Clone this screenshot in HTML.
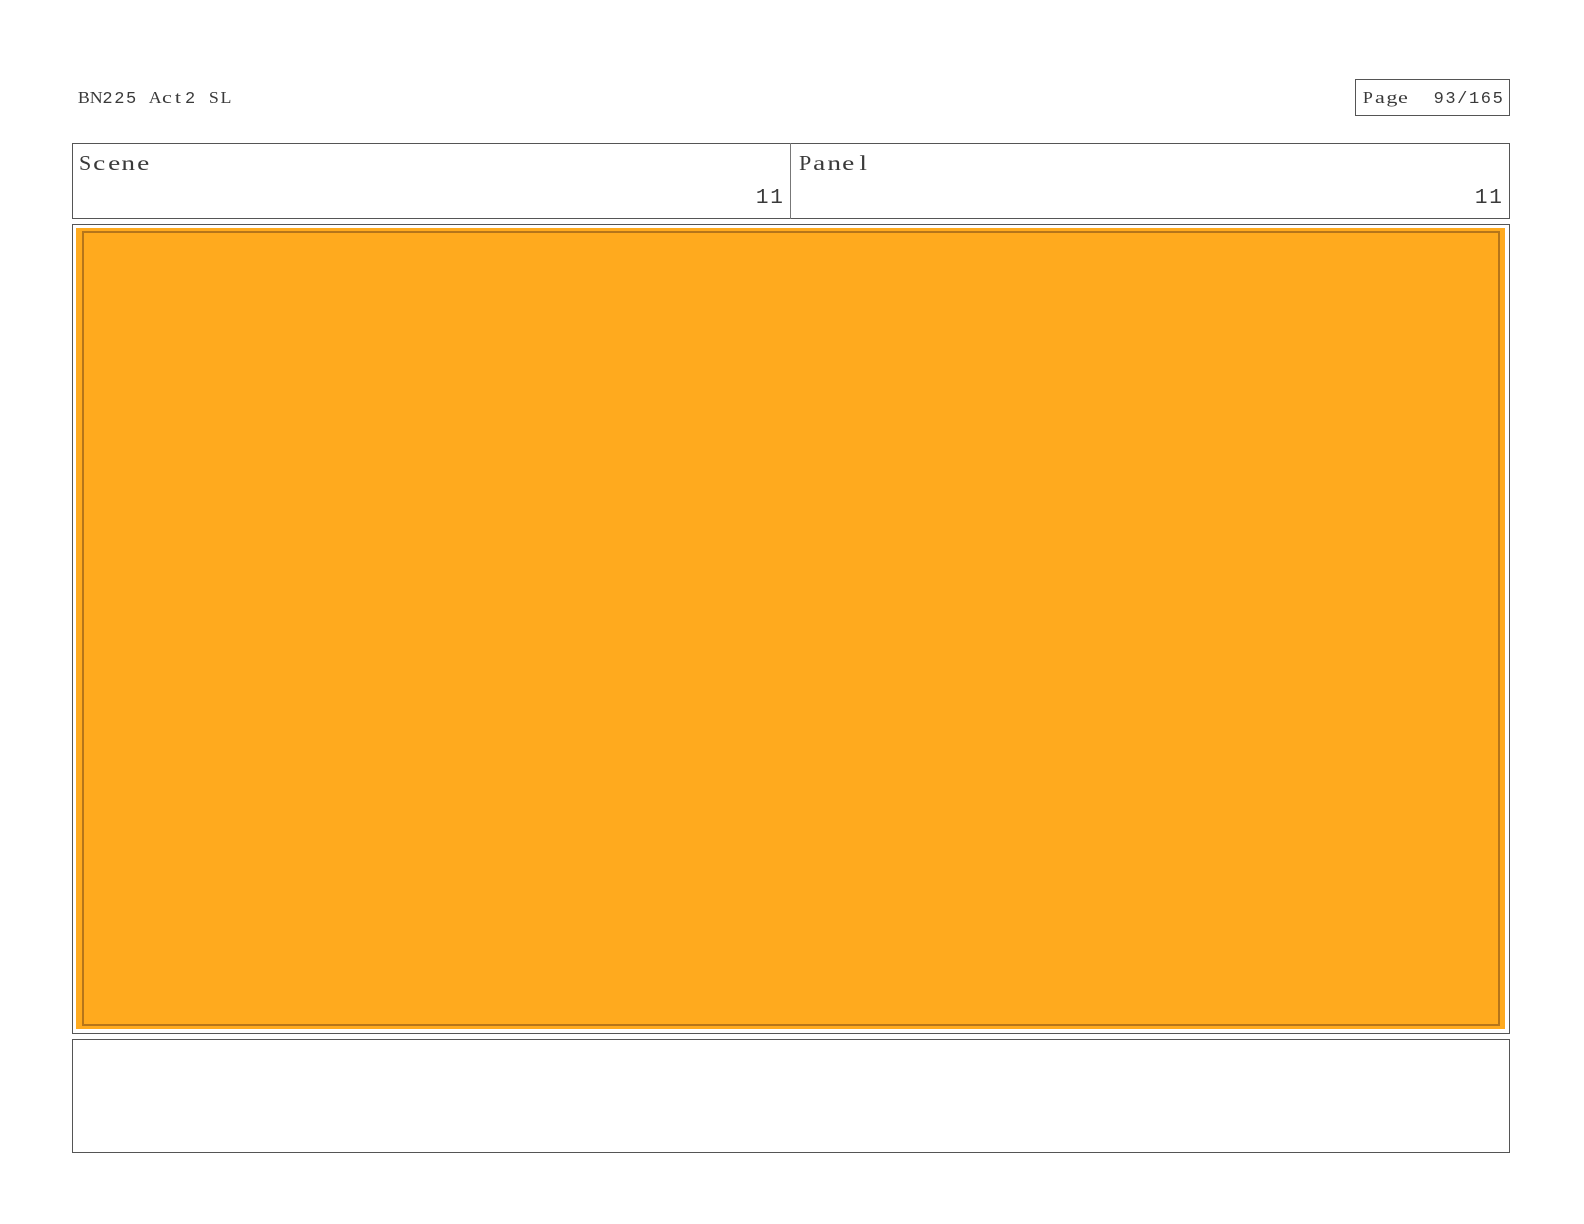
<!DOCTYPE html>
<html><head><meta charset="utf-8">
<style>
html,body{margin:0;padding:0;background:#fff;}
body{width:1584px;height:1224px;position:relative;overflow:hidden;color:#3a3a3a;}
.b{position:absolute;box-sizing:border-box;}
.t{position:absolute;white-space:pre;font-family:"Liberation Serif",serif;}
.t span{display:inline-block;text-align:center;white-space:pre;transform:scaleX(1.3);}
.t .d{font-family:"Liberation Mono",monospace;transform:none;}
.t .c{transform:scaleX(1.05);}
.s{font-size:17px;line-height:20px;}
.s span{width:11.8px;}
.l{font-size:21px;line-height:24px;}
.l span{width:14.4px;}
</style></head><body>
<div class="t s" style="left:78px;top:88px;"><span class="c">B</span><span class="c">N</span><span class="d">2</span><span class="d">2</span><span class="d">5</span><span> </span><span class="c">A</span><span>c</span><span>t</span><span class="d">2</span><span> </span><span class="c">S</span><span class="c">L</span></div>
<div class="b" style="left:1355px;top:79px;width:155px;height:37px;border:1px solid #555;"></div>
<div class="t s" style="left:1362px;top:88px;"><span class="c">P</span><span>a</span><span>g</span><span>e</span><span> </span><span> </span><span class="d">9</span><span class="d">3</span><span class="d">/</span><span class="d">1</span><span class="d">6</span><span class="d">5</span></div>
<div class="b" style="left:72px;top:143px;width:1438px;height:76px;border:1px solid #555;"></div>
<div class="b" style="left:790px;top:143px;width:1px;height:76px;background:#777;"></div>
<div class="t l" style="left:78px;top:151px;"><span class="c">S</span><span>c</span><span>e</span><span>n</span><span>e</span></div>
<div class="t l" style="left:755px;top:184px;"><span class="d">1</span><span class="d">1</span></div>
<div class="t l" style="left:798px;top:151px;"><span class="c">P</span><span>a</span><span>n</span><span>e</span><span>l</span></div>
<div class="t l" style="left:1474px;top:184px;"><span class="d">1</span><span class="d">1</span></div>
<div class="b" style="left:72px;top:224px;width:1438px;height:810px;border:1px solid #555;"></div>
<div class="b" style="left:76px;top:228px;width:1429px;height:801px;background:#ffaa1e;"></div>
<div class="b" style="left:82px;top:231px;width:1418px;height:795px;border:2px solid #b5751a;"></div>
<div class="b" style="left:72px;top:1039px;width:1438px;height:114px;border:1px solid #555;"></div>
</body></html>
